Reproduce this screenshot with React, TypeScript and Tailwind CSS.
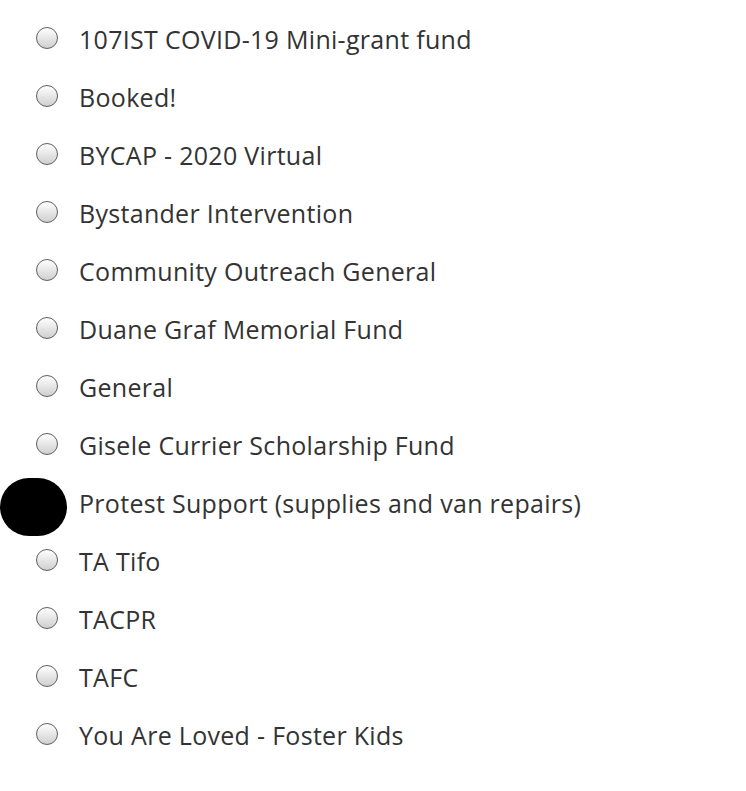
import React from "react";

const items = [
  "107IST COVID-19 Mini-grant fund",
  "Booked!",
  "BYCAP - 2020 Virtual",
  "Bystander Intervention",
  "Community Outreach General",
  "Duane Graf Memorial Fund",
  "General",
  "Gisele Currier Scholarship Fund",
  "Protest Support (supplies and van repairs)",
  "TA Tifo",
  "TACPR",
  "TAFC",
  "You Are Loved - Foster Kids",
];

export default function App() {
  return (
    <div className="w-[746px] h-[791px] bg-white pt-[10px]" style={{ fontFamily: "'Open Sans', 'Noto Sans', sans-serif" }}>
      {items.map((t, i) => (
        <div key={i} className="relative flex items-center h-[58px] pl-[36px]">
          {i === 8 ? (
            <div className="absolute left-0 top-[4px] w-[67px] h-[58px] rounded-full bg-black" />
          ) : null}
          <div className="w-[22px] h-[22px] rounded-full border-[1.5px] border-[#5f5f5f] bg-gradient-to-b from-white to-[#cfcfcf] shrink-0 -mt-[3px]" />
          <span className="ml-[21px] text-[25px] tracking-[0.3px] text-[#333333] leading-none">{t}</span>
        </div>
      ))}
    </div>
  );
}
